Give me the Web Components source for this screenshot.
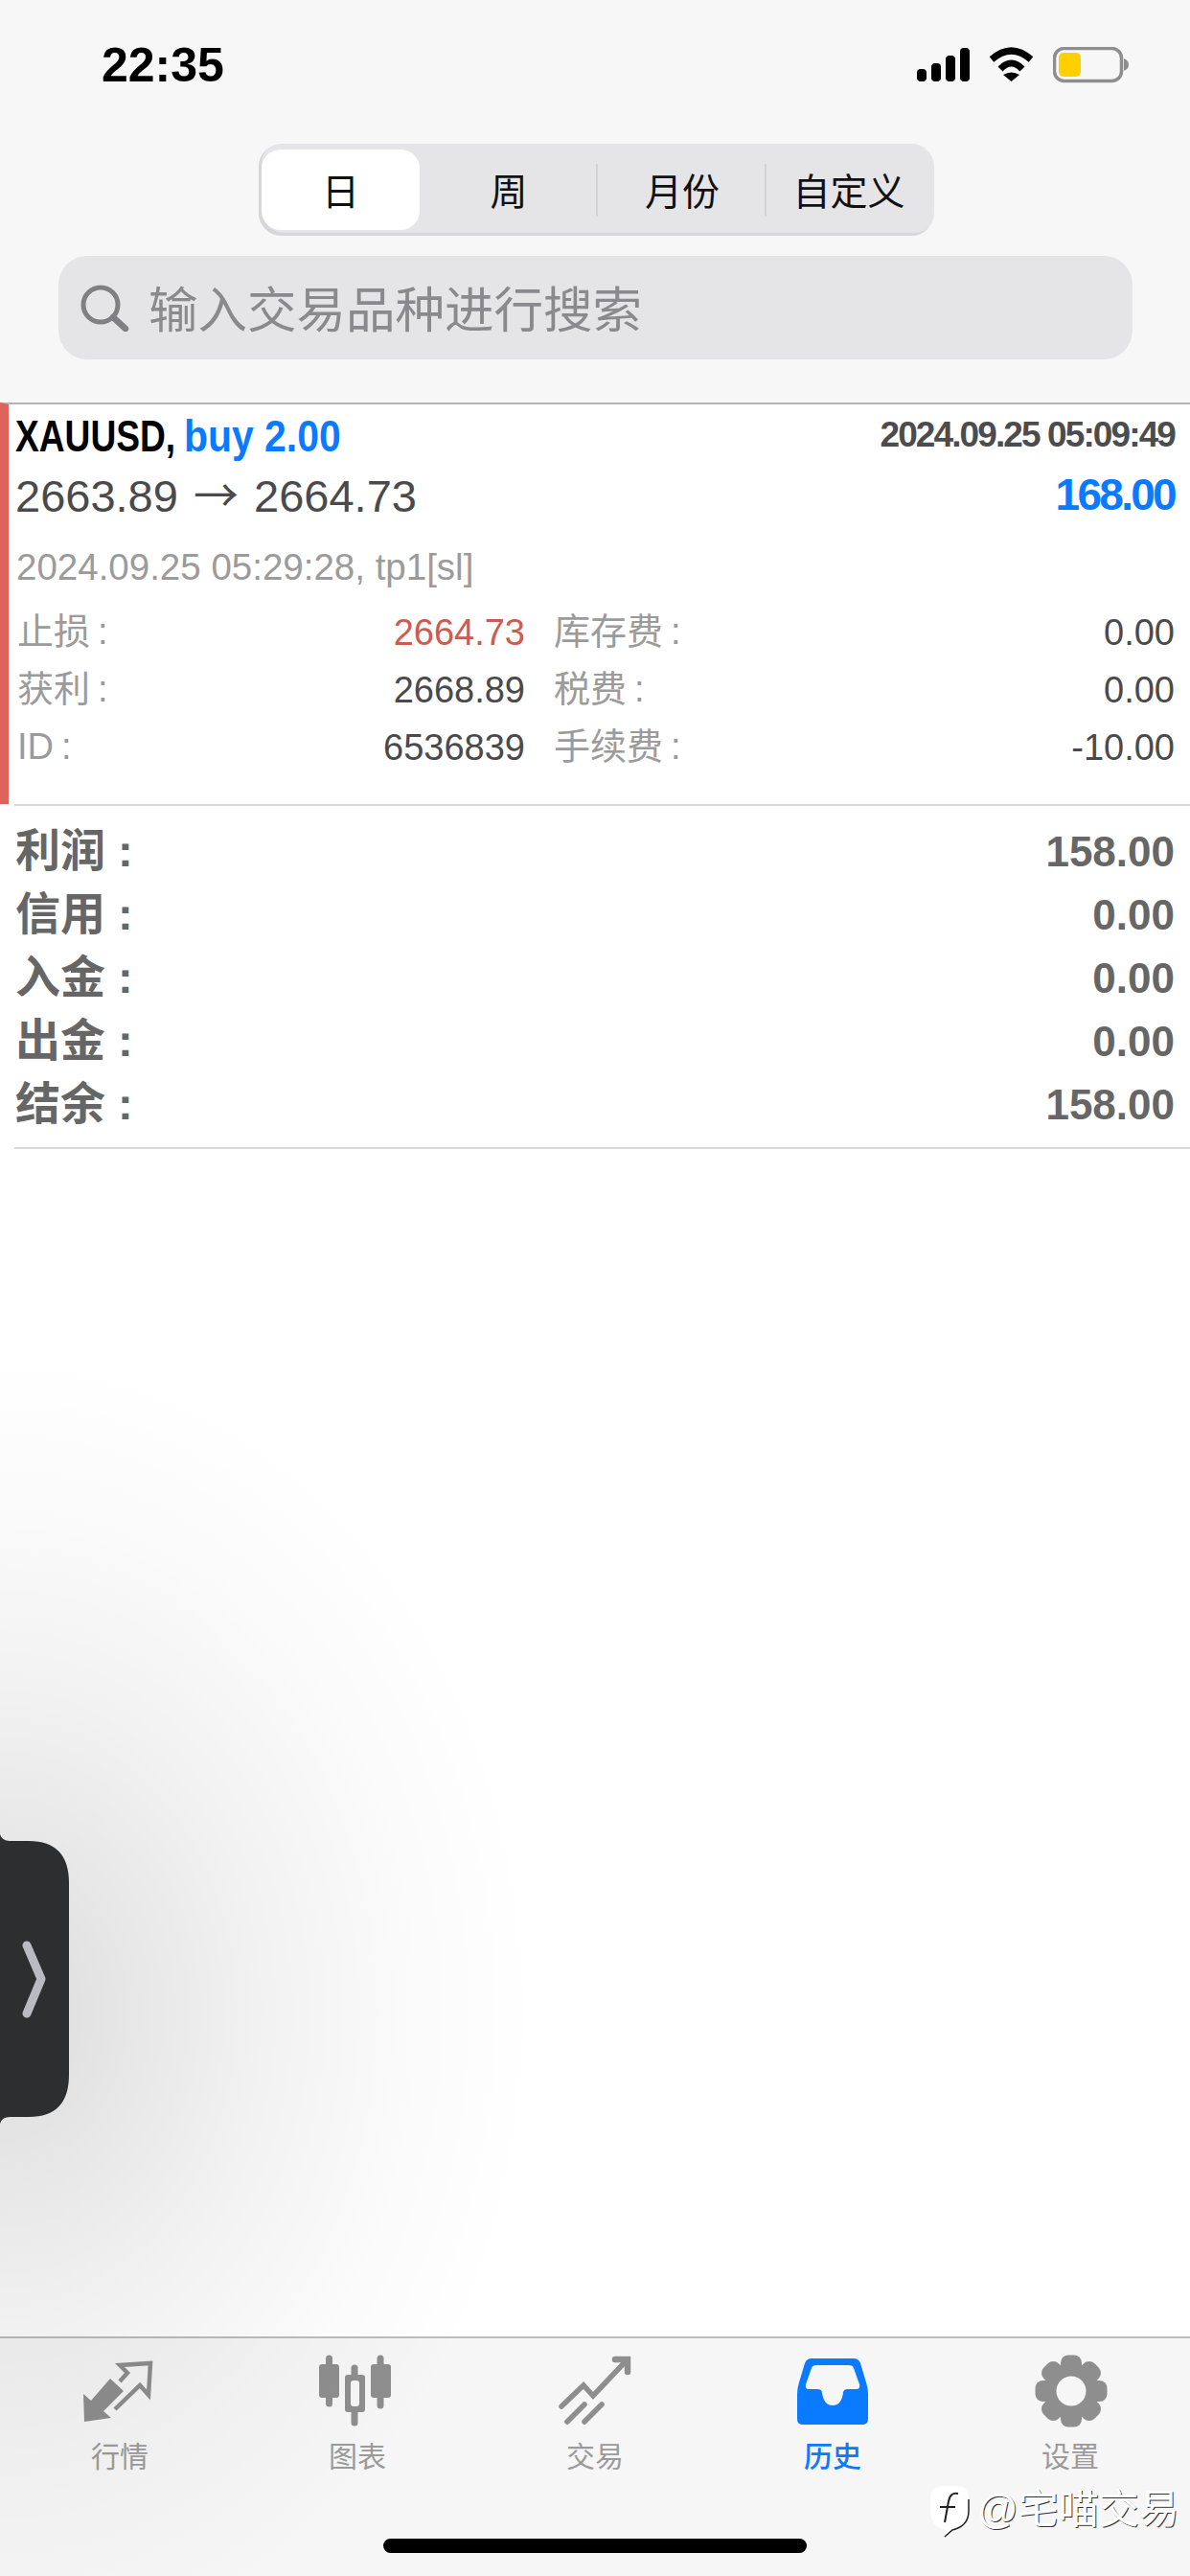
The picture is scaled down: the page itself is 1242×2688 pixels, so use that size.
<!DOCTYPE html>
<html lang="zh">
<head>
<meta charset="utf-8">
<title>历史</title>
<style>
  html, body { margin: 0; background: #fff; }
  body { font-family: "Liberation Sans", "Noto Sans CJK SC", sans-serif; }
</style>
</head>
<body>
<mt-app>
  <mt-header>
    <mt-status-bar>22:35</mt-status-bar>
    <mt-segmented>
      <mt-seg active>日</mt-seg>
      <mt-seg divider>周</mt-seg>
      <mt-seg divider>月份</mt-seg>
      <mt-seg>自定义</mt-seg>
    </mt-segmented>
    <mt-search>输入交易品种进行搜索</mt-search>
  </mt-header>
  <mt-deal>
    <span slot="symbol">XAUUSD,</span>
    <span slot="side">buy 2.00</span>
    <span slot="opened">2024.09.25 05:09:49</span>
    <span slot="prices">2663.89 <span style="font-family:'Noto Sans CJK SC',sans-serif">→</span> 2664.73</span>
    <span slot="gain">168.00</span>
    <span slot="closed">2024.09.25 05:29:28, tp1[sl]</span>
    <mt-field><span slot="label">止损</span><span style="color:#cf5a50">2664.73</span></mt-field>
    <mt-field><span slot="label">库存费</span>0.00</mt-field>
    <mt-field><span slot="label">获利</span>2668.89</mt-field>
    <mt-field><span slot="label">税费</span>0.00</mt-field>
    <mt-field><span slot="label">ID</span>6536839</mt-field>
    <mt-field><span slot="label">手续费</span>-10.00</mt-field>
  </mt-deal>
  <mt-summary>
    <mt-total><span slot="label">利润</span>158.00</mt-total>
    <mt-total><span slot="label">信用</span>0.00</mt-total>
    <mt-total><span slot="label">入金</span>0.00</mt-total>
    <mt-total><span slot="label">出金</span>0.00</mt-total>
    <mt-total><span slot="label">结余</span>158.00</mt-total>
  </mt-summary>
  <mt-tabbar>
    <mt-tab icon="quotes">行情</mt-tab>
    <mt-tab icon="chart">图表</mt-tab>
    <mt-tab icon="trade">交易</mt-tab>
    <mt-tab icon="history" active>历史</mt-tab>
    <mt-tab icon="settings">设置</mt-tab>
  </mt-tabbar>
  <mt-side-handle></mt-side-handle>
  <mt-watermark>@宅喵交易</mt-watermark>
</mt-app>

<script>
// small helper, every element is the same: open shadow root + its own markup
function define(name, html) {
  customElements.define(name, class extends HTMLElement {
    constructor() {
      super();
      this.attachShadow({ mode: 'open' }).innerHTML = typeof html === 'function' ? html(this) : html;
    }
  });
}

define('mt-app', `
  <style>
    :host { display: flex; flex-direction: column; position: relative; width: 1242px; height: 2688px; overflow: hidden; background: #fff; }
  </style>
  <slot></slot>`);

define('mt-header', `
  <style>
    :host { display: block; height: 420px; background: #f7f7f7; box-sizing: border-box; overflow: hidden; }
  </style>
  <slot></slot>`);

define('mt-status-bar', `
  <style>
    :host { display: flex; justify-content: space-between; align-items: flex-start; height: 150px; box-sizing: border-box; padding: 49px 64px 0 106px; }
    .time { font-size: 50px; font-weight: 700; line-height: 39px; color: #000; }
    .icons { display: flex; align-items: flex-start; gap: 20px; }
    svg { display: block; }
  </style>
  <div class="time"><slot></slot></div>
  <div class="icons">
    <svg width="55" height="36" viewBox="0 0 55 36" fill="#000">
      <rect x="0" y="23" width="10" height="13" rx="4"/>
      <rect x="15" y="17" width="10" height="19" rx="4"/>
      <rect x="30" y="9" width="10" height="27" rx="4"/>
      <rect x="45" y="1" width="10" height="35" rx="4"/>
    </svg>
    <svg width="47" height="36" viewBox="0 0 47 36">
      <path d="M3 13 Q23.500 -5 44 13" fill="none" stroke="#000" stroke-width="7"/>
      <path d="M12 23 Q23.500 11 35 23" fill="none" stroke="#000" stroke-width="7"/>
      <path d="M15 29 L23.500 36 L32 29 Q23.500 24 15 29Z" fill="#000"/>
    </svg>
    <svg width="79" height="38" viewBox="0 0 79 38">
      <rect x="1.500" y="1.500" width="70" height="34" rx="10" fill="none" stroke="#8e8e8e" stroke-width="3.500"/>
      <rect x="6" y="6" width="23" height="25" rx="5" fill="#ffcf00"/>
      <path d="M74 12 Q79 14 79 18.500 Q79 23 74 25Z" fill="#8e8e8e"/>
    </svg>
  </div>`);

define('mt-segmented', `
  <style>
    :host { display: grid; grid-template-columns: 165px 186px 176px 1fr; width: 705px; height: 96px; box-sizing: border-box; margin: 0 0 21px 270px; padding: 6px 3px; background: #e5e5e7; border-radius: 24px; box-shadow: inset 3px -3px 0 #d6d6d8; }
  </style>
  <slot></slot>`);

define('mt-seg', `
  <style>
    :host { display: flex; align-items: center; justify-content: center; padding-bottom: 3px; font-size: 39px; color: #111; }
    :host([active]) { background: #fff; border-radius: 20px; }
    :host([divider]) { background: linear-gradient(#d2d2d4, #d2d2d4) right center / 2px 55px no-repeat; }
  </style>
  <slot></slot>`);

define('mt-search', `
  <style>
    :host { display: flex; align-items: center; gap: 20px; height: 108px; box-sizing: border-box; margin: 0 60px 0 61px; padding-left: 22px; background: #e5e5e7; border-radius: 30px; font-size: 51.500px; color: #8a8a8e; }
    svg { display: block; flex: none; }
    span { padding-bottom: 4px; }
  </style>
  <svg width="52" height="50" viewBox="0 0 52 50" fill="none" stroke="#808084">
    <circle cx="22" cy="22" r="18" stroke-width="5"/>
    <path d="M35 35 L48 47" stroke-width="6.500" stroke-linecap="round"/>
  </svg>
  <span><slot></slot></span>`);

define('mt-deal', `
  <style>
    :host { display: block; height: 419px; box-sizing: border-box; border-top: 2px solid #b4b4b4; border-left: 9px solid #e0635a; }
    .line { display: flex; justify-content: space-between; align-items: center; padding: 0 16px 0 7px; white-space: nowrap; }
    .head { height: 64px; font-size: 47px; font-weight: 700; }
    .symbol { color: #000; display: inline-block; transform: scaleX(.79); transform-origin: left center; margin-right: -49px; }
    .side { color: #0a7aff; display: inline-block; transform: scaleX(.87); transform-origin: left center; }
    .opened { font-size: 37px; color: #4c4c4e; letter-spacing: -1.900px; }
    .quote { height: 60px; font-size: 47px; line-height: 50px; word-spacing: 3px; color: #4a4a4c; }
    .gain { color: #0a7aff; font-weight: 700; letter-spacing: -2.700px; font-size: 46px; }
    .closed { height: 44px; margin-top: 24px; padding-left: 8px; font-size: 38.500px; color: #9b9b9b; }
    .grid { display: grid; grid-template-columns: 530px 648px; column-gap: 30px; padding-left: 9px; margin-top: 16px; }
  </style>
  <div class="line head">
    <span><span class="symbol"><slot name="symbol"></slot></span> <span class="side"><slot name="side"></slot></span></span>
    <span class="opened"><slot name="opened"></slot></span>
  </div>
  <div class="line quote">
    <span><slot name="prices"></slot></span>
    <span class="gain"><slot name="gain"></slot></span>
  </div>
  <div class="line closed"><span><slot name="closed"></slot></span></div>
  <div class="grid"><slot></slot></div>`);

define('mt-field', `
  <style>
    :host { display: flex; justify-content: space-between; align-items: center; height: 60px; font-size: 38px; color: #4a4a4c; white-space: nowrap; }
    .label { color: #9b9b9b; font-size: 38px; line-height: 50px; padding-bottom: 2px; }
    .colon { margin-left: 8px; }
  </style>
  <span class="label"><slot name="label"></slot><span class="colon">:</span></span>
  <span><slot></slot></span>`);

define('mt-summary', `
  <style>
    :host { display: block; height: 360px; box-sizing: border-box; margin-left: 15px; padding: 15px 16px 0 1px; border-top: 2px solid #d8d8d8; border-bottom: 2px solid #d8d8d8; }
  </style>
  <slot></slot>`);

define('mt-total', `
  <style>
    :host { display: flex; justify-content: space-between; align-items: center; height: 66px; font-size: 44px; font-weight: 700; color: #666; white-space: nowrap; }
    .label { font-size: 47px; line-height: 60px; padding-bottom: 3px; }
    .colon { margin-left: 13px; }
  </style>
  <span class="label"><slot name="label"></slot><span class="colon">:</span></span>
  <span><slot></slot></span>`);

define('mt-tabbar', `
  <style>
    :host { display: block; margin-top: auto; height: 250px; box-sizing: border-box; border-top: 2px solid #bcbcbc; background: #f6f6f6; padding-top: 10px; }
    .tabs { display: grid; grid-template-columns: repeat(5, 248px); padding-left: 1px; }
    .home { display: block; width: 442px; height: 15px; margin: 67px auto 0; background: #000; border-radius: 8px; }
  </style>
  <div class="tabs"><slot></slot></div>
  <div class="home"></div>`);

const gearTeeth = [0, 45, 90, 135, 180, 225, 270, 315]
  .map(a => `<rect x="45" y="7.500" width="22" height="20" rx="8" transform="rotate(${a} 56 45)"/>`).join('');

const tabIcons = {
  quotes: `<path fill="#8e8e8e" d="M17 48 L25 55 L45 32 L59 45 L38 66 L46 73 L18 77Z"/>
    <path fill="none" stroke="#8e8e8e" stroke-width="4.500" d="M55 35 L63 26 L55 18 L87 16 L85 49 L76 39 L50 64"/>`,
  chart: `<g stroke="#8e8e8e" stroke-width="7" stroke-linecap="round"><path d="M25.500 11 V58"/><path d="M79 11 V60"/><path d="M52 21 V78"/></g>
    <g fill="#8e8e8e"><rect x="15" y="17" width="21" height="35" rx="3"/><rect x="69" y="17" width="21" height="35" rx="3"/><rect x="42" y="28" width="21" height="39" rx="3"/></g>
    <rect x="48" y="34" width="9" height="27" rx="3" fill="#f6f6f6"/>`,
  trade: `<g fill="none" stroke="#8e8e8e" stroke-linecap="round"><path stroke-width="5.500" d="M20 61 L43 39 L53 50 L86 15"/><path stroke-width="6.500" d="M76 12 H89 V25"/><path stroke-width="5.500" d="M26 77 L44 59"/><path stroke-width="5.500" d="M44 77 L62 59"/></g>`,
  history: `<path fill="#0a7aff" fill-rule="evenodd" d="M33 11 H77 Q82 11 84 16 L90 36 Q92 42 92 48 V74 Q92 80 86 80 H24 Q18 80 18 74 V48 Q18 42 20 36 L26 16 Q28 11 33 11Z M38 18 H72 Q76 18 77 21 L83 38 Q84 43 80 43 H71 Q66 43 66 47 Q64 60 55 60 Q46 60 44 47 Q44 43 39 43 H30 Q26 43 27 38 L33 21 Q34 18 38 18Z"/>`,
  settings: `<g fill="#8e8e8e">${gearTeeth}<circle cx="56" cy="45" r="29"/></g><circle cx="56" cy="45" r="15.500" fill="#f6f6f6"/>`
};

define('mt-tab', el => `
  <style>
    :host { display: flex; flex-direction: column; align-items: center; font-size: 30px; color: #9b9b9b; }
    :host([active]) { color: #0a7aff; font-weight: 500; }
    svg { display: block; }
    .text { height: 36px; line-height: 36px; margin-top: 6px; }
  </style>
  <svg width="110" height="90" viewBox="0 0 110 90">${tabIcons[el.getAttribute('icon')]}</svg>
  <span class="text"><slot></slot></span>`);

define('mt-side-handle', `
  <style>
    :host { position: absolute; inset: 0; pointer-events: none; background: radial-gradient(ellipse 560px 690px at 0 2100px, rgba(0,0,0,.14), rgba(0,0,0,.095) 25%, rgba(0,0,0,.05) 50%, rgba(0,0,0,.018) 75%, rgba(0,0,0,0)); }
    svg { position: absolute; left: 0; top: 1910px; }
  </style>
  <svg width="80" height="310" viewBox="0 1910 80 310">
    <path fill="#2d2e2f" d="M0 1914 Q2 1921 10 1921 H30 Q72 1921 72 1965 V2165 Q72 2209 30 2209 H10 Q2 2209 0 2216Z"/>
    <path fill="none" stroke="#b9bac2" stroke-width="9" stroke-linecap="round" stroke-linejoin="round" d="M28 2030 L43 2065 L28 2101"/>
  </svg>`);

define('mt-watermark', `
  <style>
    :host { position: absolute; left: 970px; top: 2590px; display: flex; align-items: center; gap: 8px; font-size: 42px; line-height: 50px; color: #fff; text-shadow: 1px 1px 0 #333; white-space: nowrap; }
    svg { display: block; }
  </style>
  <svg width="42" height="58" viewBox="0 0 42 58">
    <path fill="#fff" d="M14 4 H28 Q41 4 41 18 V30 Q41 46 24 50 L16 57 L17 50 Q1 46 1 30 V18 Q1 4 14 4Z"/>
    <path fill="none" stroke="#222" stroke-width="2" d="M30 12 Q22 10 20 20 L16 42 M11 26 H27"/>
    <path fill="none" stroke="#222" stroke-width="1.500" d="M41 18 V30 Q41 46 24 50 L16 57"/>
  </svg>
  <span><slot></slot></span>`);
</script>
</body>
</html>
